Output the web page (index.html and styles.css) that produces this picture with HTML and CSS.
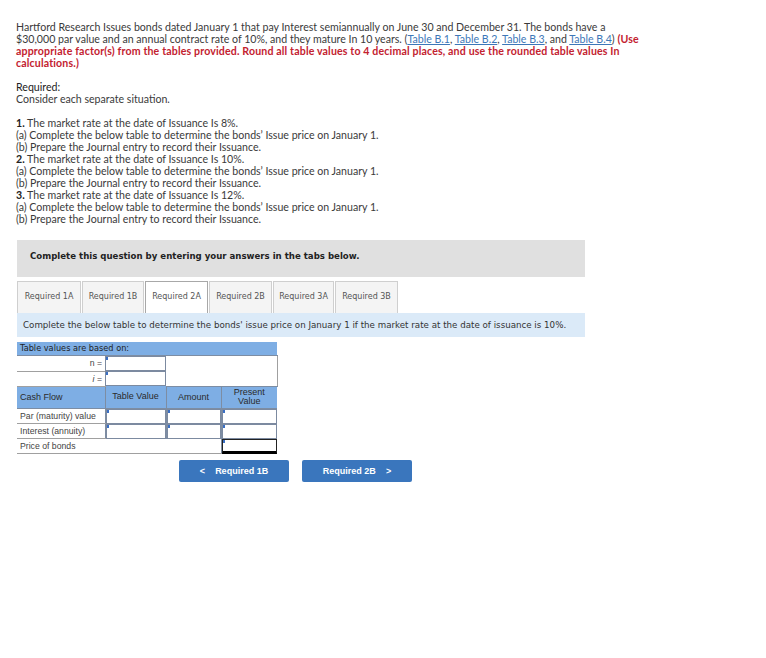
FILE: index.html
```html
<!DOCTYPE html>
<html>
<head>
<meta charset="utf-8">
<link rel="stylesheet" href="styles.css">
</head>
<body>
<div class="page">
  <p class="intro">Hartford Research Issues bonds dated January 1 that pay Interest semiannually on June 30 and December 31. The bonds have a<br>$30,000 par value and an annual contract rate of 10%, and they mature In 10 years. (<a href="#">Table B.1</a>, <a href="#">Table B.2</a>, <a href="#">Table B.3</a>, and <a href="#">Table B.4</a>) <span class="red">(Use<br>appropriate factor(s) from the tables provided. Round all table values to 4 decimal places, and use the rounded table values In<br>calculations.)</span></p>
  <p class="req"><span class="reqlabel">Required:</span><br>Consider each separate situation.</p>
  <p class="list"><b>1.</b> The market rate at the date of Issuance Is 8%.<br>(a) Complete the below table to determine the bonds’ Issue price on January 1.<br>(b) Prepare the Journal entry to record their Issuance.<br><b>2.</b> The market rate at the date of Issuance Is 10%.<br>(a) Complete the below table to determine the bonds’ Issue price on January 1.<br>(b) Prepare the Journal entry to record their Issuance.<br><b>3.</b> The market rate at the date of Issuance Is 12%.<br>(a) Complete the below table to determine the bonds’ Issue price on January 1.<br>(b) Prepare the Journal entry to record their Issuance.</p>

  <div class="question">
    <div class="banner">Complete this question by entering your answers in the tabs below.</div>
    <div class="tabs">
      <div class="tab">Required 1A</div>
      <div class="tab">Required 1B</div>
      <div class="tab active">Required 2A</div>
      <div class="tab">Required 2B</div>
      <div class="tab">Required 3A</div>
      <div class="tab">Required 3B</div>
    </div>
    <div class="info">Complete the below table to determine the bonds' issue price on January 1 if the market rate at the date of issuance is 10%.</div>

    <table class="pv">
      <colgroup><col class="c1"><col class="c2"><col class="c3"><col class="c4"></colgroup>
      <tr class="based"><td colspan="4">Table values are based on:</td></tr>
      <tr class="ni"><td class="lab">n =</td><td class="inp"><span class="box"></span></td><td colspan="2" rowspan="2" class="blank"></td></tr>
      <tr class="ni"><td class="lab"><i>i</i> =</td><td class="inp"><span class="box"></span></td></tr>
      <tr class="head"><td class="cf">Cash Flow</td><td>Table Value</td><td>Amount</td><td>Present<br>Value</td></tr>
      <tr class="row"><td class="name">Par (maturity) value</td><td class="inp"><span class="box"></span></td><td class="inp"><span class="box"></span></td><td class="inp"><span class="box"></span></td></tr>
      <tr class="row"><td class="name">Interest (annuity)</td><td class="inp"><span class="box"></span></td><td class="inp"><span class="box"></span></td><td class="inp"><span class="box"></span></td></tr>
      <tr class="row last"><td class="name" colspan="3">Price of bonds</td><td class="inp total"><span class="box"></span></td></tr>
    </table>

    <div class="nav">
      <a class="btn" href="#"><span class="chev">&lt;</span>Required 1B</a>
      <a class="btn" href="#">Required 2B<span class="chev r">&gt;</span></a>
    </div>
  </div>
</div>
</body>
</html>
```
FILE: styles.css
```css
html, body { margin: 0; padding: 0; background: #fff; }
.page {
  padding: 21px 0 0 16px;
  font-family: Lato, "Open Sans", sans-serif;
  font-size: 10.6px;
  line-height: 12px;
  color: #3a3a3a;
}
p { margin: 0; }
.intro { margin-bottom: 12px; white-space: nowrap; }
.intro a { color: #3d77b8; text-decoration: underline; }
.red { color: #c3222f; font-weight: bold; letter-spacing: 0.15px; }
.req { margin-bottom: 12px; }
.reqlabel { color: #222; }
.list b { font-weight: bold; color: #222; }

.question { margin: 15px 0 0 1px; width: 568px; }
.banner {
  background: #e0e0e0;
  height: 37px;
  line-height: 32px;
  padding-left: 13px;
  font-family: "DejaVu Sans", Verdana, sans-serif;
  font-weight: bold;
  font-size: 8.6px;
  color: #222;
}
.tabs { display: flex; gap: 1px; margin-top: 4px; height: 32px; }
.tab {
  width: 62px;
  box-sizing: border-box;
  border: 1px solid #cfcfcf;
  border-bottom: none;
  background: #f4f4f4;
  font-family: "DejaVu Sans", Verdana, sans-serif;
  font-size: 8px;
  color: #555;
  text-align: center;
  line-height: 30px;
  white-space: nowrap;
}
.tab:nth-child(1) { width: 64px; }
.tab:nth-child(2) { width: 62px; }
.tab:nth-child(3) { width: 63px; }
.tab:nth-child(4) { width: 63px; }
.tab:nth-child(5) { width: 61px; }
.tab:nth-child(6) { width: 63px; }
.tab.active { background: #fff; border-color: #a8a8a8; }
.info {
  background: #dbeaf8;
  height: 24px;
  line-height: 24px;
  padding-left: 6px;
  font-family: "DejaVu Sans", Verdana, sans-serif;
  font-size: 8.7px;
  color: #333;
  white-space: nowrap;
}

.pv {
  margin-top: 5px;
  border-collapse: collapse;
  table-layout: fixed;
  width: 260px;
  font-family: "Liberation Sans", Arial, sans-serif;
  font-size: 8.7px;
  color: #333;
}
.c1 { width: 88px; } .c2 { width: 61px; } .c3 { width: 55px; } .c4 { width: 56px; }
.pv td { padding: 0; }
.based td {
  background: #7eaee4;
  height: 13px;
  line-height: 13px;
  padding-left: 3px;
  font-family: "DejaVu Sans", Tahoma, sans-serif;
  font-size: 8.2px;
  color: #1f1f1f;
  border-bottom: 1px solid #7d8da3;
}
.ni td { height: 14px; }
.ni .lab {
  text-align: right;
  padding-right: 3px;
  border-bottom: 1px solid #a0a0a0;
  line-height: 14px;
  color: #444;
}
.blank { border-right: 1px solid #a0a0a0; border-bottom: 1px solid #7d8da3; }
.inp { position: relative; vertical-align: top; }
.box {
  display: block;
  box-sizing: border-box;
  height: 15px;
  border: 1px solid #7c8aa0;
  background: #fff;
  position: relative;
}
.box::before {
  content: "";
  position: absolute;
  left: 0; top: 0;
  width: 2px; height: 3px;
  background: #3a6fc4;
}
.head td {
  background: #7eaee4;
  height: 21px;
  text-align: center;
  font-size: 9px;
  line-height: 9px;
  color: #2a2a2a;
  border-left: 1px solid #7d8da3;
  border-bottom: 1px solid #7d8da3;
}
.head td.cf { text-align: left; padding-left: 3px; border-left: none; }
.row td.name {
  height: 14px;
  padding-left: 3px;
  line-height: 14px;
  border-bottom: 1px solid #a0a0a0;
  color: #444;
}
.row td.inp { border-left: 1px solid #7d8da3; }
.total .box { border: 1px solid #222; border-bottom: 3px solid #000; }

.nav { display: flex; gap: 13px; margin: 6px 0 0 162px; }
.btn {
  display: flex;
  align-items: center;
  justify-content: center;
  width: 110px;
  height: 22px;
  background: #3a76bd;
  border-radius: 2px;
  color: #fff;
  font-family: "Liberation Sans", Arial, sans-serif;
  font-weight: bold;
  font-size: 9px;
  text-decoration: none;
}
.chev { margin-right: 10px; font-size: 9px; }
.chev.r { margin-right: 0; margin-left: 10px; }
```
